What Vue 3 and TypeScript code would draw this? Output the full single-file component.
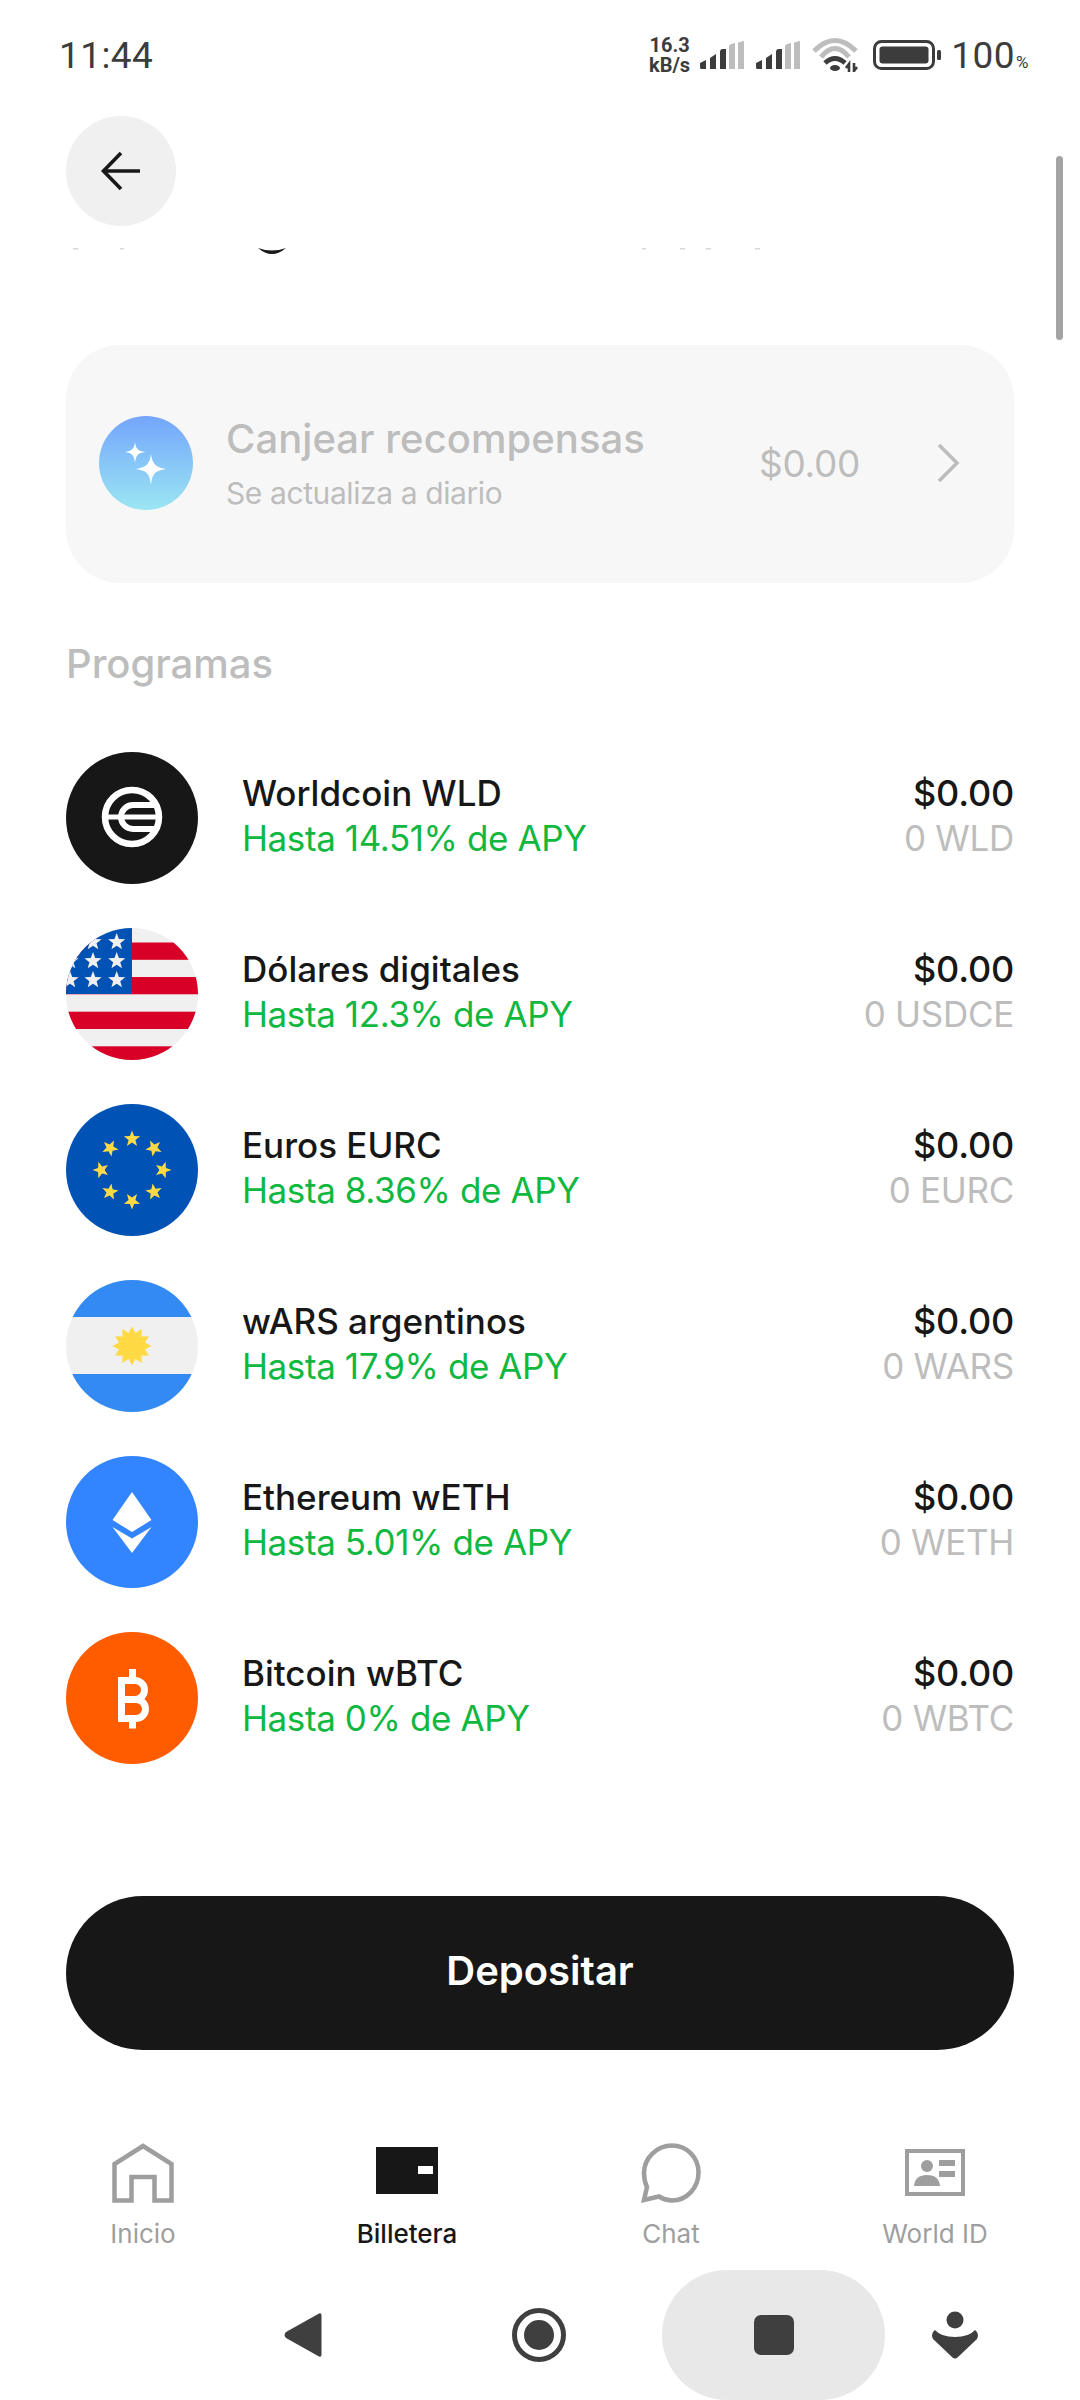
<script setup lang="ts">
// Billetera screen: rewards card, program list and the bottom bars

interface Program {
  id: string;
  name: string;
  apy: string;
  amount: string;
  balance: string;
}

const programs: Program[] = [
  { id: 'wld', name: 'Worldcoin WLD', apy: 'Hasta 14.51% de APY', amount: '$0.00', balance: '0 WLD' },
  { id: 'usd', name: 'Dólares digitales', apy: 'Hasta 12.3% de APY', amount: '$0.00', balance: '0 USDCE' },
  { id: 'eur', name: 'Euros EURC', apy: 'Hasta 8.36% de APY', amount: '$0.00', balance: '0 EURC' },
  { id: 'ars', name: 'wARS argentinos', apy: 'Hasta 17.9% de APY', amount: '$0.00', balance: '0 WARS' },
  { id: 'eth', name: 'Ethereum wETH', apy: 'Hasta 5.01% de APY', amount: '$0.00', balance: '0 WETH' },
  { id: 'btc', name: 'Bitcoin wBTC', apy: 'Hasta 0% de APY', amount: '$0.00', balance: '0 WBTC' },
];

// n-pointed star, pointing up before the rotation
function star(cx: number, cy: number, r: number, inner = r * 0.42, n = 5, rot = 0): string {
  const pts: string[] = [];
  for (let i = 0; i < n * 2; i++) {
    const rad = i % 2 === 0 ? r : inner;
    const a = ((rot + (i * 180) / n - 90) * Math.PI) / 180;
    pts.push(`${(cx + rad * Math.cos(a)).toFixed(2)},${(cy + rad * Math.sin(a)).toFixed(2)}`);
  }
  return pts.join(' ');
}

const usStars = [
  [27, 14], [50.7, 14], [4, 33], [27, 33], [50.7, 33], [4, 52], [27, 52], [50.7, 52],
].map(([x, y]) => star(x, y, 9));

const euStars = Array.from({ length: 8 }, (_, i) => {
  const deg = i * 45;
  const a = ((deg - 90) * Math.PI) / 180;
  return star(66 + 31 * Math.cos(a), 66 + 31 * Math.sin(a), 8.6, 3.6, 5, deg);
});

const sun = star(66, 66, 19.5, 13.5, 12);
</script>

<template>
  <div class="screen">
    <!-- status bar -->
    <div class="status">
      <span class="clock">11:44</span>
      <div class="status-right">
        <div class="speed"><span>16.3</span><span>kB/s</span></div>
        <svg v-for="s in 2" :key="s" class="signal" width="44" height="28" viewBox="0 0 44 28">
          <path d="M0 22l6-3v9H1.500a1.500 1.500 0 0 1-1.500-1.500z" fill="#3c3c3c" />
          <path d="M10 17l6-4v15h-6z" fill="#3c3c3c" />
          <path d="M20 11q0-3 3-3h3v20h-6z" fill="#3c3c3c" />
          <path d="M29 6q0-2 2-3l4-1v26h-6z" fill="#bdbdbd" />
          <path d="M38 1.500l6-1.500v28h-6z" fill="#bdbdbd" />
        </svg>
        <svg class="wifi" width="46" height="34" viewBox="0 0 46 34">
          <g fill="none" stroke-width="5">
            <path d="M2 13Q23-8 44 13" stroke="#bdbdbd" />
            <path d="M9 19Q23 2 37 19" stroke="#bdbdbd" />
            <path d="M13 25Q23 16 33 25" stroke="#3c3c3c" />
          </g>
          <ellipse cx="23" cy="30" rx="5" ry="3" fill="#3c3c3c" />
          <path d="M37 34v-8l-3 4M42 25v8l3-4" fill="none" stroke="#3c3c3c" stroke-width="2.600" />
        </svg>
        <svg class="battery" width="68" height="30" viewBox="0 0 68 30">
          <rect x="1.500" y="1.500" width="59" height="27" rx="7" fill="none" stroke="#3c3c3c" stroke-width="3" />
          <rect x="6.500" y="6.500" width="49" height="17" rx="3" fill="#3c3c3c" />
          <rect x="64" y="10" width="4" height="10" rx="1.500" fill="#3c3c3c" />
        </svg>
        <span class="percent">100<small>%</small></span>
      </div>
    </div>

    <!-- top of the scrolled area -->
    <button class="back" type="button" aria-label="Volver">
      <svg width="40" height="40" viewBox="0 0 40 40" fill="none" stroke="#181818" stroke-width="3.600">
        <path d="M39 20H3" />
        <path d="M20 2 2.500 20 20 38" />
      </svg>
    </button>
    <svg class="clipped" width="1080" height="6" viewBox="0 0 1080 6">
      <path d="M258 0q14 5 28 0q-14 12-28 0z" fill="#181818" />
      <g fill="#d8d8d8">
        <rect x="73" y="0" width="5" height="1.500" />
        <rect x="120" y="0" width="4" height="1.500" />
        <rect x="642" y="0" width="4" height="1.500" />
        <rect x="680" y="0" width="5" height="1.500" />
        <rect x="706" y="0" width="5" height="1.500" />
        <rect x="755" y="0" width="5" height="1.500" />
      </g>
    </svg>

    <main class="content">
      <div class="reward-card">
        <div class="reward-icon">
          <svg width="94" height="94" viewBox="0 0 94 94" fill="#fff">
            <path d="M36 26c1 7 3 9 10 10-7 1-9 3-10 11-1-8-3-10-10-11 7-1 9-3 10-10z" />
            <path d="M52 38c1.500 10 4 13 15 15-11 2-13.500 4-15 16-1.500-12-4-14-15-16 11-2 13.500-5 15-15z" />
          </svg>
        </div>
        <div class="reward-text">
          <span class="reward-title">Canjear recompensas</span>
          <span class="reward-sub">Se actualiza a diario</span>
        </div>
        <span class="reward-amount">$0.00</span>
        <svg class="chevron" width="24" height="40" viewBox="0 0 24 40" fill="none" stroke="#bcbcbc" stroke-width="3.500">
          <path d="M3 2l18 18L3 38" />
        </svg>
      </div>

      <h2 class="section">Programas</h2>

      <ul class="programs">
        <li v-for="p in programs" :key="p.id" class="program">
          <svg class="coin" width="132" height="132" viewBox="0 0 132 132">
            <defs>
              <clipPath :id="`clip-${p.id}`"><circle cx="66" cy="66" r="66" /></clipPath>
            </defs>
            <g :clip-path="`url(#clip-${p.id})`">
              <template v-if="p.id === 'wld'">
                <rect width="132" height="132" fill="#171717" />
                <g transform="translate(66 65)" fill="none" stroke="#fff">
                  <circle r="27" stroke-width="6.500" />
                  <path d="M25 -12H1A12 12 0 0 0 1 12H25" stroke-width="6" />
                  <path d="M-25 0H25" stroke-width="5" />
                </g>
              </template>
              <template v-else-if="p.id === 'usd'">
                <rect width="132" height="132" fill="#f0f0f0" />
                <g fill="#d80027">
                  <rect y="14.500" width="132" height="17.300" />
                  <rect y="49" width="132" height="17.300" />
                  <rect y="83.700" width="132" height="17.300" />
                  <rect y="118.300" width="132" height="14" />
                </g>
                <rect width="66" height="66" fill="#0052b4" />
                <polygon v-for="(pts, i) in usStars" :key="i" :points="pts" fill="#f0f0f0" />
              </template>
              <template v-else-if="p.id === 'eur'">
                <rect width="132" height="132" fill="#0052b4" />
                <polygon v-for="(pts, i) in euStars" :key="i" :points="pts" fill="#ffda44" />
              </template>
              <template v-else-if="p.id === 'ars'">
                <rect width="132" height="132" fill="#f0f0f0" />
                <rect width="132" height="37" fill="#338af3" />
                <rect y="94" width="132" height="38" fill="#338af3" />
                <polygon :points="sun" fill="#ffda44" />
              </template>
              <template v-else-if="p.id === 'eth'">
                <rect width="132" height="132" fill="#3385ff" />
                <path d="M66 36 85.500 64 66 76 46.500 64z" fill="#fff" />
                <path d="M46.500 71 66 82.500 85.500 71 66 97z" fill="#fff" />
              </template>
              <template v-else>
                <rect width="132" height="132" fill="#ff5c00" />
                <g fill="none" stroke="#fff" stroke-width="7">
                  <path d="M55.500 45v45" />
                  <path d="M52 48.500H69A9.500 9.500 0 0 1 69 67.500H55.500" />
                  <path d="M55.500 67.500H70A9.500 9.500 0 0 1 70 86.500H52" />
                </g>
                <rect x="63" y="37" width="7" height="9" fill="#fff" />
                <rect x="63" y="89" width="7" height="7.500" fill="#fff" />
              </template>
            </g>
          </svg>
          <div class="program-text">
            <span class="program-name">{{ p.name }}</span>
            <span class="program-apy">{{ p.apy }}</span>
          </div>
          <div class="program-values">
            <span class="program-amount">{{ p.amount }}</span>
            <span class="program-balance">{{ p.balance }}</span>
          </div>
        </li>
      </ul>

      <button class="deposit" type="button">Depositar</button>
    </main>

    <nav class="tabs">
      <div class="tab">
        <svg width="62" height="60" viewBox="0 0 62 60" fill="none" stroke="#9e9e9e" stroke-width="4.500">
          <path d="M2.500 57.500V21L31 3l28.500 18v36.500H42.500V34h-23v23.500z" />
        </svg>
        <span>Inicio</span>
      </div>
      <div class="tab active">
        <svg width="62" height="60" viewBox="0 0 62 60">
          <rect x="0" y="4" width="62" height="47" fill="#171717" />
          <rect x="42" y="23" width="15" height="8" fill="#fff" />
        </svg>
        <span>Billetera</span>
      </div>
      <div class="tab">
        <svg width="60" height="60" viewBox="0 0 60 60" fill="none" stroke="#9e9e9e" stroke-width="4.500">
          <path d="M31 2.500c15 0 26.500 12 26.500 27S46 57.500 31 57.500c-5 0-9-1.500-13-4L3 57l3-13C4 40 3 35 3 30 3 15 16 2.500 31 2.500z" />
        </svg>
        <span>Chat</span>
      </div>
      <div class="tab">
        <svg width="60" height="60" viewBox="0 0 60 60">
          <rect x="2" y="8" width="56" height="43" fill="none" stroke="#9e9e9e" stroke-width="4" />
          <circle cx="22" cy="23" r="6" fill="#9e9e9e" />
          <path d="M9 43q1-11 13-11t13 11z" fill="#9e9e9e" />
          <rect x="34" y="17" width="16" height="6" fill="#9e9e9e" />
          <rect x="34" y="28" width="16" height="6" fill="#9e9e9e" />
        </svg>
        <span>World ID</span>
      </div>
    </nav>

    <!-- android buttons -->
    <div class="sysnav">
      <svg class="sys-back" width="38" height="46" viewBox="0 0 38 46">
        <path d="M35 1.500q2.500-1 2.500 2v39q0 3-2.500 2L2 26q-3-3 0-6z" fill="#3f3f3f" />
      </svg>
      <svg class="sys-home" width="54" height="54" viewBox="0 0 54 54">
        <circle cx="27" cy="27" r="24.500" fill="none" stroke="#3f3f3f" stroke-width="5" />
        <circle cx="27" cy="27" r="15" fill="#3f3f3f" />
      </svg>
      <div class="sys-recent"><span></span></div>
      <svg class="sys-person" width="46" height="48" viewBox="0 0 46 48">
        <circle cx="23" cy="9" r="8.500" fill="#3f3f3f" />
        <path d="M3 19q6 7 20 7t20-7q3 2 3 5 0 2-1 4L26 46q-3 3-6 0L1 28q-1-2-1-4 0-3 3-5z" fill="#3f3f3f" />
      </svg>
    </div>

    <div class="scrollbar"></div>
  </div>
</template>

<style scoped>
.screen {
  position: relative;
  width: 1080px;
  height: 2400px;
  background: #fff;
  overflow: hidden;
  display: flex;
  flex-direction: column;
  font-family: Inter, 'Liberation Sans', sans-serif;
  color: #171717;
}

/* Status bar */
.status {
  height: 110px;
  padding: 0 51px 0 59px;
  display: flex;
  align-items: center;
  justify-content: space-between;
  font-family: Roboto, 'Liberation Sans', sans-serif;
  color: #3c3c3c;
  flex-shrink: 0;
}

.clock {
  font-size: 37px;
  letter-spacing: 0.4px;
}

.status-right {
  display: flex;
  align-items: center;
}

.speed {
  display: flex;
  flex-direction: column;
  align-items: center;
  font-size: 20px;
  font-weight: 700;
  line-height: 20px;
  margin-right: 10px;
}

.signal {
  margin-right: 12px;
}

.wifi {
  margin-right: 15px;
}

.battery {
  margin-right: 10px;
}

.percent {
  font-size: 37px;
  letter-spacing: 0.5px;
}

.percent small {
  font-size: 17px;
  margin-left: 1px;
}

/* Header */
.back {
  width: 110px;
  height: 110px;
  margin: 6px 0 0 66px;
  border: none;
  border-radius: 50%;
  background: #f0f0f0;
  display: flex;
  align-items: center;
  justify-content: center;
  padding: 0;
  flex-shrink: 0;
}

.clipped {
  display: block;
  margin-top: 22px;
  flex-shrink: 0;
}

.content {
  padding: 0 66px;
  margin-top: 91px;
  display: flex;
  flex-direction: column;
}

/* Rewards card */
.reward-card {
  height: 238px;
  border-radius: 54px;
  background: #f7f7f7;
  display: flex;
  align-items: center;
  padding: 0 54px 2px 33px;
  box-sizing: border-box;
}

.reward-icon {
  width: 94px;
  height: 94px;
  border-radius: 50%;
  background: linear-gradient(180deg, #74a5fb 0%, #9be6f3 100%);
  flex-shrink: 0;
}

.reward-icon svg {
  display: block;
}

.reward-text {
  margin-left: 33px;
  flex: 1;
  display: flex;
  flex-direction: column;
  gap: 13px;
}

.reward-title {
  font-size: 40px;
  line-height: 46px;
  font-weight: 500;
  letter-spacing: 0.05px;
  color: #bdbdbd;
}

.reward-sub {
  font-size: 30px;
  line-height: 36px;
  letter-spacing: -0.4px;
  color: #bdbdbd;
}

.reward-amount {
  font-size: 37px;
  letter-spacing: -0.3px;
  color: #bdbdbd;
}

.chevron {
  margin-left: 76px;
}

.section {
  margin: 56px 0 0;
  font-size: 40px;
  line-height: 50px;
  font-weight: 500;
  color: #bdbdbd;
}

/* Programs */
.programs {
  list-style: none;
  margin: 63px 0 0;
  padding: 0;
  display: flex;
  flex-direction: column;
  gap: 44px;
}

.program {
  display: flex;
  align-items: center;
  height: 132px;
}

.coin {
  flex-shrink: 0;
}

.program-text {
  margin-left: 44px;
  flex: 1;
  display: flex;
  flex-direction: column;
  padding-bottom: 4px;
}

.program-name {
  font-size: 35px;
  line-height: 45px;
  font-weight: 500;
  color: #171717;
}

.program-amount {
  font-size: 36px;
  line-height: 45px;
  font-weight: 500;
  letter-spacing: -0.2px;
  color: #171717;
}

.program-apy {
  font-size: 35px;
  line-height: 45px;
  letter-spacing: -0.4px;
  color: #10b83f;
}

.program-values {
  display: flex;
  flex-direction: column;
  align-items: flex-end;
  padding-bottom: 4px;
}

.program-balance {
  font-size: 35px;
  line-height: 45px;
  letter-spacing: -0.3px;
  color: #bdbdbd;
}

.deposit {
  margin-top: 132px;
  height: 154px;
  padding: 0 0 6px;
  border: none;
  border-radius: 77px;
  background: #171717;
  color: #fff;
  font-family: inherit;
  font-size: 40px;
  font-weight: 600;
}

/* Bottom tabs */
.tabs {
  margin: 93px 13px 0 11px;
  display: grid;
  grid-template-columns: repeat(4, 1fr);
}

.tab {
  display: flex;
  flex-direction: column;
  align-items: center;
  gap: 15px;
  font-size: 26px;
  line-height: 32px;
  color: #9e9e9e;
}

.tab.active {
  color: #171717;
  font-weight: 500;
}

/* System navigation */
.sysnav {
  position: absolute;
  left: 0;
  right: 0;
  bottom: 0;
  height: 130px;
  display: flex;
  align-items: center;
}

.sys-back {
  margin-left: 284px;
}

.sys-home {
  margin-left: 190px;
}

.sys-recent {
  margin-left: 96px;
  width: 223px;
  height: 130px;
  border-radius: 65px;
  background: #e8e8e8;
  display: flex;
  align-items: center;
  justify-content: center;
}

.sys-recent span {
  width: 40px;
  height: 40px;
  border-radius: 7px;
  background: #3f3f3f;
}

.sys-person {
  margin-left: 47px;
}

/* Overlay scrollbar */
.scrollbar {
  position: absolute;
  left: 1056px;
  top: 156px;
  width: 7px;
  height: 184px;
  border-radius: 4px;
  background: #a3a3a3;
}
</style>

<style>
html,
body {
  margin: 0;
  background: #fff;
}
</style>
